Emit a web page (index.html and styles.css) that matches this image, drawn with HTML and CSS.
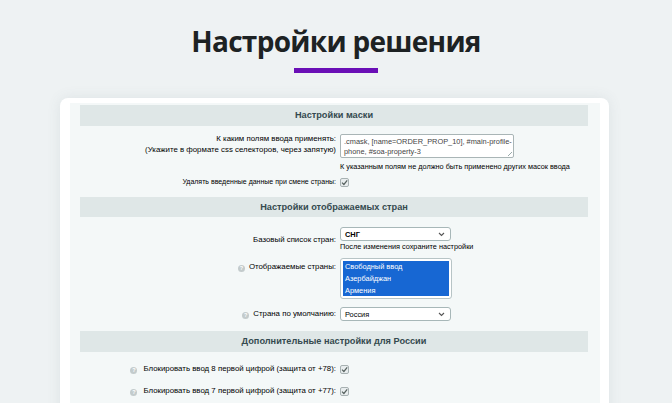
FILE: index.html
```html
<!DOCTYPE html>
<html lang="ru">
<head>
<meta charset="utf-8">
<title>Настройки решения</title>
<link rel="stylesheet" href="styles.css">
</head>
<body>
<header class="page-head">
  <h1 class="title">Настройки решения</h1>
  <div class="accent"></div>
</header>
<main class="card">
  <div class="panel">
    <div class="sec">Настройки маски</div>

    <div class="row r-mask">
      <div class="lbl lbl-top">К каким полям ввода применять:<br>(Укажите в формате css селекторов, через запятую)</div>
      <div class="fld">
        <div class="ta">.cmask, [name=ORDER_PROP_10], #main-profile-<br>phone, #soa-property-3<span class="grip"></span></div>
        <div class="note">К указанным полям не должно быть применено других масок ввода</div>
      </div>
    </div>

    <div class="row r-cb r-clear">
      <div class="lbl lbl-narrow">Удалять введенные данные при смене страны:</div>
      <div class="fld"><span class="cb"><svg viewBox="0 0 9 9" width="9" height="9"><path d="M2 4.6 L3.9 6.5 L7.2 2.4" fill="none" stroke="#56615f" stroke-width="1.2"/></svg></span></div>
    </div>

    <div class="sec sec2">Настройки отображаемых стран</div>

    <div class="row r-base">
      <div class="lbl">Базовый список стран:</div>
      <div class="fld">
        <div class="sel"><span class="sel-b">СНГ</span><svg viewBox="0 0 7 5" width="7" height="5"><path d="M1 1 L3.5 3.5 L6 1" fill="none" stroke="#555" stroke-width="1.1"/></svg></div>
        <div class="note note2">После изменения сохраните настройки</div>
      </div>
    </div>

    <div class="row r-list">
      <div class="lbl lbl-list"><span class="help">?</span>Отображаемые страны:</div>
      <div class="fld">
        <div class="list">
          <div class="opts">
            <div class="opt">Свободный ввод</div>
            <div class="opt">Азербайджан</div>
            <div class="opt">Армения</div>
          </div>
        </div>
      </div>
    </div>

    <div class="row r-def">
      <div class="lbl"><span class="help">?</span>Страна по умолчанию:</div>
      <div class="fld">
        <div class="sel"><span>Россия</span><svg viewBox="0 0 7 5" width="7" height="5"><path d="M1 1 L3.5 3.5 L6 1" fill="none" stroke="#555" stroke-width="1.1"/></svg></div>
      </div>
    </div>

    <div class="sec sec3">Дополнительные настройки для России</div>

    <div class="row r-cb r-b1">
      <div class="lbl"><span class="help help-wide">?</span>Блокировать ввод 8 первой цифрой (защита от +78):</div>
      <div class="fld"><span class="cb"><svg viewBox="0 0 9 9" width="9" height="9"><path d="M2 4.6 L3.9 6.5 L7.2 2.4" fill="none" stroke="#56615f" stroke-width="1.2"/></svg></span></div>
    </div>

    <div class="row r-cb r-b2">
      <div class="lbl"><span class="help help-wide">?</span>Блокировать ввод 7 первой цифрой (защита от +77):</div>
      <div class="fld"><span class="cb"><svg viewBox="0 0 9 9" width="9" height="9"><path d="M2 4.6 L3.9 6.5 L7.2 2.4" fill="none" stroke="#56615f" stroke-width="1.2"/></svg></span></div>
    </div>
  </div>
</main>
</body>
</html>
```

FILE: styles.css
```css
html, body {
  margin: 0;
  padding: 0;
}
body {
  background: #eef2f3;
  font-family: "Liberation Sans", Arial, sans-serif;
  color: #000;
}
.page-head {
  display: flex;
  flex-direction: column;
  align-items: center;
}
.title {
  margin: 21px 0 0;
  font-family: "Open Sans", "Noto Sans", sans-serif;
  font-weight: 700;
  font-size: 28px;
  line-height: 40px;
  color: #1d2223;
  letter-spacing: -0.7px;
}
.accent {
  margin-top: 7px;
  width: 84px;
  height: 5px;
  background: #6a0fb6;
}
.card {
  display: block;
  margin: 25px 0 0 60px;
  width: 549px;
  box-sizing: border-box;
  background: #ffffff;
  border-radius: 8px;
  padding: 5px 9px 0 10px;
  box-shadow: 0 0 14px rgba(80, 100, 110, 0.10);
}
.panel {
  background: #f4f8f8;
  padding: 2px 12px 40px 10px;
}
.sec {
  height: 21px;
  line-height: 21px;
  background: #dfe7e7;
  text-align: center;
  font-weight: 700;
  font-size: 9.2px;
  color: #354a4f;
}
.sec2 { margin-top: 10px; height: 20px; line-height: 20px; }
.sec3 { margin-top: 10px; }

.row {
  display: grid;
  grid-template-columns: 256px 1fr;
  column-gap: 4px;
  align-items: center;
  font-size: 7.85px;
}
.lbl {
  text-align: right;
  color: #000;
  line-height: 10px;
}
.lbl-top {
  align-self: start;
  line-height: 11px;
  margin-top: -1px;
}
.lbl-narrow { font-size: 7px; }
.lbl-list {
  align-self: start;
  padding-top: 4px;
}
.fld {
  display: flex;
  flex-direction: column;
  align-items: flex-start;
}

.r-mask { margin-top: 8px; }
.ta {
  position: relative;
  width: 174px;
  height: 24px;
  box-sizing: border-box;
  background: #fff;
  border: 1px solid #a9b5b6;
  border-radius: 2px;
  padding: 2px 3px;
  font-size: 7.4px;
  line-height: 10px;
  color: #444;
  white-space: nowrap;
  overflow: hidden;
}
.grip {
  position: absolute;
  right: 1px;
  bottom: 1px;
  width: 4px;
  height: 4px;
  background: linear-gradient(135deg, transparent 45%, #9aa 45%, #9aa 58%, transparent 58%);
}
.note {
  margin-top: 4px;
  line-height: 10px;
  font-size: 7.3px;
  color: #000;
  white-space: nowrap;
}
.note2 { margin-top: 1px; }

.r-cb .lbl { line-height: 10px; }
.r-clear { margin-top: 5px; }
.cb {
  display: block;
  width: 9px;
  height: 9px;
  box-sizing: border-box;
  border: 1px solid #a7b1b2;
  border-radius: 2px;
  background: #e8edee;
  overflow: hidden;
}
.cb svg { display: block; margin: -1px 0 0 -1px; }

.r-base { margin-top: 10px; }
.sel {
  width: 111px;
  height: 14px;
  box-sizing: border-box;
  background: #fff;
  border: 1px solid #a7b7b8;
  border-radius: 3px;
  display: flex;
  align-items: center;
  justify-content: space-between;
  padding: 0 5px 0 4px;
  font-size: 7.4px;
  color: #000;
}
.sel-b { font-weight: 700; }
.sel svg { display: block; }

.r-list { margin-top: 6px; }
.list {
  width: 112px;
  height: 41px;
  box-sizing: border-box;
  border: 1px solid #b7c4c6;
  border-radius: 3px;
  background: #fff;
  padding: 2px;
}
.opts {
  background: #1767d3;
  height: 100%;
}
.opt {
  color: #fff;
  font-size: 7.4px;
  line-height: 12px;
  padding-left: 2px;
}

.r-def { margin-top: 8px; }
.help {
  display: inline-block;
  width: 7px;
  height: 7px;
  border-radius: 50%;
  background: #c3cbcc;
  color: #fff;
  font-size: 5.5px;
  line-height: 7px;
  text-align: center;
  font-weight: 700;
  vertical-align: -1px;
  margin-right: 4px;
}
.help-wide { margin-right: 6px; }
.r-b1 { margin-top: 12px; }
.r-b2 { margin-top: 12px; }
```
